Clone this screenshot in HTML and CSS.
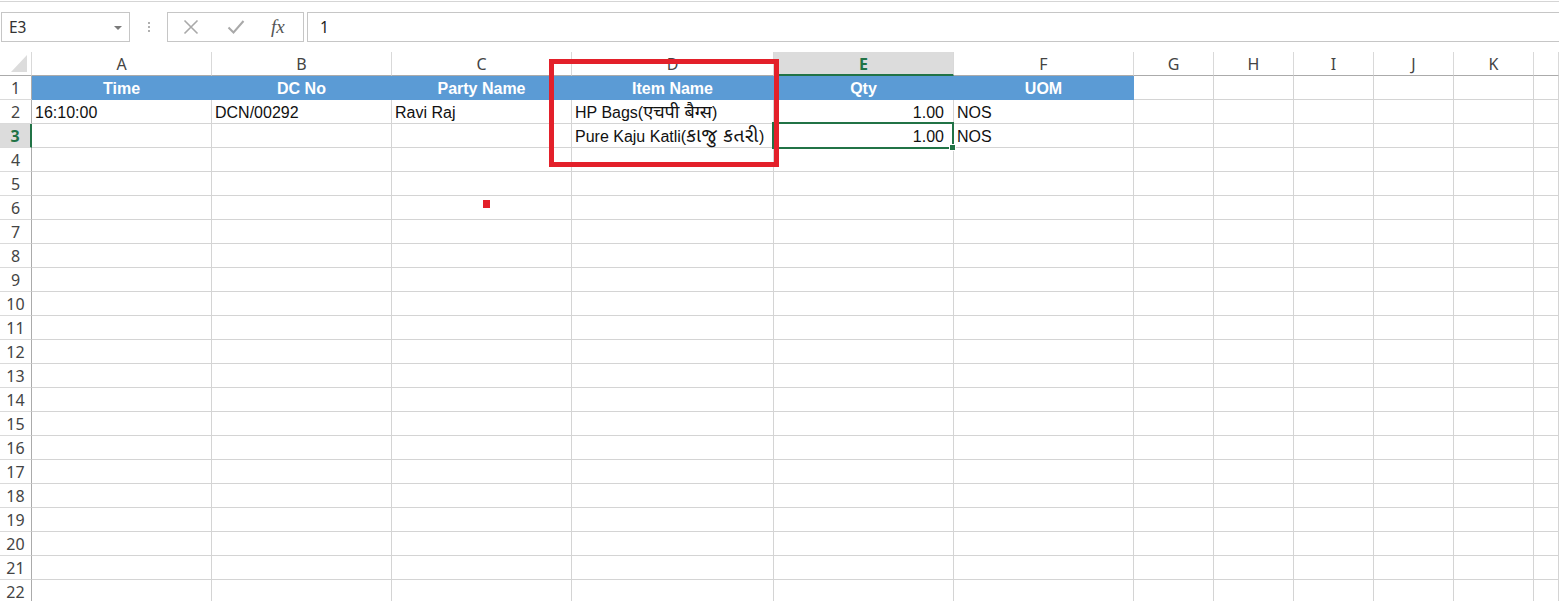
FILE: index.html
```html
<!DOCTYPE html>
<html lang="en">
<head>
<meta charset="utf-8">
<title>Sheet</title>
<link rel="stylesheet" href="styles.css">
</head>
<body>
<div class="app">
  <div class="topline"></div>
  <div class="fbar">
    <div class="namebox">
      <span class="name">E3</span>
      <span class="arrow"></span>
    </div>
    <div class="grip"><i></i><i></i><i></i></div>
    <div class="fbtns">
      <svg class="ico" width="16" height="16" viewBox="0 0 16 16"><path d="M1.5 1.5 L14.5 14.5 M14.5 1.5 L1.5 14.5" stroke="#a9a9a9" stroke-width="1.6" fill="none"/></svg>
      <svg class="ico" width="18" height="14" viewBox="0 0 18 14"><path d="M1.5 7.5 L6.5 12.5 L16.5 1" stroke="#a9a9a9" stroke-width="2" fill="none"/></svg>
      <span class="fx">fx</span>
    </div>
    <div class="finput">1</div>
  </div>

  <div class="sheet">
    <div class="row head">
      <div class="corner"><span class="tri"></span></div>
      <div class="ch">A</div><div class="ch">B</div><div class="ch">C</div><div class="ch">D</div>
      <div class="ch sel">E</div><div class="ch">F</div><div class="ch">G</div><div class="ch">H</div>
      <div class="ch">I</div><div class="ch">J</div><div class="ch">K</div><div class="ch"></div>
    </div>
    <div class="row">
      <div class="rh">1</div>
      <div class="c hd">Time</div><div class="c hd">DC No</div><div class="c hd">Party Name</div><div class="c hd">Item Name</div>
      <div class="c hd">Qty</div><div class="c hd">UOM</div>
      <div class="c"></div><div class="c"></div><div class="c"></div><div class="c"></div><div class="c"></div><div class="c"></div>
    </div>
    <div class="row">
      <div class="rh">2</div>
      <div class="c">16:10:00</div><div class="c">DCN/00292</div><div class="c">Ravi Raj</div><div class="c">HP Bags(<span class="indic">एचपी बैग्स</span>)</div>
      <div class="c num">1.00</div><div class="c">NOS</div>
      <div class="c"></div><div class="c"></div><div class="c"></div><div class="c"></div><div class="c"></div><div class="c"></div>
    </div>
    <div class="row">
      <div class="rh sel">3</div>
      <div class="c"></div><div class="c"></div><div class="c"></div><div class="c">Pure Kaju Katli(<span class="indic gu">કાજુ કતરી</span>)</div>
      <div class="c num">1.00</div><div class="c">NOS</div>
      <div class="c"></div><div class="c"></div><div class="c"></div><div class="c"></div><div class="c"></div><div class="c"></div>
    </div>
    <div class="row"><div class="rh">4</div><div class="c"></div><div class="c"></div><div class="c"></div><div class="c"></div><div class="c"></div><div class="c"></div><div class="c"></div><div class="c"></div><div class="c"></div><div class="c"></div><div class="c"></div><div class="c"></div></div>
    <div class="row"><div class="rh">5</div><div class="c"></div><div class="c"></div><div class="c"></div><div class="c"></div><div class="c"></div><div class="c"></div><div class="c"></div><div class="c"></div><div class="c"></div><div class="c"></div><div class="c"></div><div class="c"></div></div>
    <div class="row"><div class="rh">6</div><div class="c"></div><div class="c"></div><div class="c"></div><div class="c"></div><div class="c"></div><div class="c"></div><div class="c"></div><div class="c"></div><div class="c"></div><div class="c"></div><div class="c"></div><div class="c"></div></div>
    <div class="row"><div class="rh">7</div><div class="c"></div><div class="c"></div><div class="c"></div><div class="c"></div><div class="c"></div><div class="c"></div><div class="c"></div><div class="c"></div><div class="c"></div><div class="c"></div><div class="c"></div><div class="c"></div></div>
    <div class="row"><div class="rh">8</div><div class="c"></div><div class="c"></div><div class="c"></div><div class="c"></div><div class="c"></div><div class="c"></div><div class="c"></div><div class="c"></div><div class="c"></div><div class="c"></div><div class="c"></div><div class="c"></div></div>
    <div class="row"><div class="rh">9</div><div class="c"></div><div class="c"></div><div class="c"></div><div class="c"></div><div class="c"></div><div class="c"></div><div class="c"></div><div class="c"></div><div class="c"></div><div class="c"></div><div class="c"></div><div class="c"></div></div>
    <div class="row"><div class="rh">10</div><div class="c"></div><div class="c"></div><div class="c"></div><div class="c"></div><div class="c"></div><div class="c"></div><div class="c"></div><div class="c"></div><div class="c"></div><div class="c"></div><div class="c"></div><div class="c"></div></div>
    <div class="row"><div class="rh">11</div><div class="c"></div><div class="c"></div><div class="c"></div><div class="c"></div><div class="c"></div><div class="c"></div><div class="c"></div><div class="c"></div><div class="c"></div><div class="c"></div><div class="c"></div><div class="c"></div></div>
    <div class="row"><div class="rh">12</div><div class="c"></div><div class="c"></div><div class="c"></div><div class="c"></div><div class="c"></div><div class="c"></div><div class="c"></div><div class="c"></div><div class="c"></div><div class="c"></div><div class="c"></div><div class="c"></div></div>
    <div class="row"><div class="rh">13</div><div class="c"></div><div class="c"></div><div class="c"></div><div class="c"></div><div class="c"></div><div class="c"></div><div class="c"></div><div class="c"></div><div class="c"></div><div class="c"></div><div class="c"></div><div class="c"></div></div>
    <div class="row"><div class="rh">14</div><div class="c"></div><div class="c"></div><div class="c"></div><div class="c"></div><div class="c"></div><div class="c"></div><div class="c"></div><div class="c"></div><div class="c"></div><div class="c"></div><div class="c"></div><div class="c"></div></div>
    <div class="row"><div class="rh">15</div><div class="c"></div><div class="c"></div><div class="c"></div><div class="c"></div><div class="c"></div><div class="c"></div><div class="c"></div><div class="c"></div><div class="c"></div><div class="c"></div><div class="c"></div><div class="c"></div></div>
    <div class="row"><div class="rh">16</div><div class="c"></div><div class="c"></div><div class="c"></div><div class="c"></div><div class="c"></div><div class="c"></div><div class="c"></div><div class="c"></div><div class="c"></div><div class="c"></div><div class="c"></div><div class="c"></div></div>
    <div class="row"><div class="rh">17</div><div class="c"></div><div class="c"></div><div class="c"></div><div class="c"></div><div class="c"></div><div class="c"></div><div class="c"></div><div class="c"></div><div class="c"></div><div class="c"></div><div class="c"></div><div class="c"></div></div>
    <div class="row"><div class="rh">18</div><div class="c"></div><div class="c"></div><div class="c"></div><div class="c"></div><div class="c"></div><div class="c"></div><div class="c"></div><div class="c"></div><div class="c"></div><div class="c"></div><div class="c"></div><div class="c"></div></div>
    <div class="row"><div class="rh">19</div><div class="c"></div><div class="c"></div><div class="c"></div><div class="c"></div><div class="c"></div><div class="c"></div><div class="c"></div><div class="c"></div><div class="c"></div><div class="c"></div><div class="c"></div><div class="c"></div></div>
    <div class="row"><div class="rh">20</div><div class="c"></div><div class="c"></div><div class="c"></div><div class="c"></div><div class="c"></div><div class="c"></div><div class="c"></div><div class="c"></div><div class="c"></div><div class="c"></div><div class="c"></div><div class="c"></div></div>
    <div class="row"><div class="rh">21</div><div class="c"></div><div class="c"></div><div class="c"></div><div class="c"></div><div class="c"></div><div class="c"></div><div class="c"></div><div class="c"></div><div class="c"></div><div class="c"></div><div class="c"></div><div class="c"></div></div>
    <div class="row"><div class="rh">22</div><div class="c"></div><div class="c"></div><div class="c"></div><div class="c"></div><div class="c"></div><div class="c"></div><div class="c"></div><div class="c"></div><div class="c"></div><div class="c"></div><div class="c"></div><div class="c"></div></div>

    <div class="selbox"><span class="handle"></span></div>
    <div class="redbox"></div>
    <div class="reddot"></div>
  </div>
</div>
</body>
</html>
```

FILE: styles.css
```css
html, body {
  margin: 0;
  padding: 0;
  background: #ffffff;
  overflow: hidden;
}
.app {
  width: 1559px;
  height: 601px;
  overflow: hidden;
  font-family: "Noto Sans", "Open Sans", sans-serif;
}
.topline {
  margin-top: 1px;
  border-top: 1px solid #d5d5d5;
}
.fbar {
  display: flex;
  align-items: stretch;
  height: 30px;
  margin-top: 10px;
  margin-bottom: 10px;
}
.namebox {
  box-sizing: border-box;
  width: 129px;
  margin-left: 1px;
  border: 1px solid #c6c6c6;
  display: flex;
  align-items: center;
  justify-content: space-between;
  padding: 0 7px 0 7px;
}
.name {
  font-size: 15.5px;
  color: #333;
}
.arrow {
  width: 0;
  height: 0;
  border-left: 4px solid transparent;
  border-right: 4px solid transparent;
  border-top: 4px solid #7a7a7a;
  margin-top: 1px;
}
.grip {
  width: 37px;
  display: flex;
  flex-direction: column;
  align-items: center;
  justify-content: center;
  gap: 2px;
}
.grip i {
  display: block;
  width: 2px;
  height: 2px;
  background: #b0b0b0;
}
.fbtns {
  box-sizing: border-box;
  width: 137px;
  border: 1px solid #c6c6c6;
  display: flex;
  align-items: center;
  padding-left: 15px;
  gap: 28px;
}
.fbtns .ico { display: block; }
.fx {
  font-family: "Liberation Serif", "DejaVu Serif", serif;
  font-style: italic;
  font-size: 19px;
  color: #555;
  margin-left: -2px;
  line-height: 1;
  margin-top: -2px;
}
.finput {
  box-sizing: border-box;
  flex: 1;
  margin-left: 3px;
  border: 1px solid #c6c6c6;
  border-right: none;
  font-size: 15.5px;
  color: #222;
  padding-left: 12px;
  line-height: 28px;
}
.sheet {
  position: relative;
}
.row {
  display: grid;
  grid-template-columns: 32px 180px 180px 180px 202px 180px 180px 80px 80px 80px 80px 80px 25px;
  height: 24px;
}
.row > div {
  box-sizing: border-box;
  height: 24px;
}
.corner {
  border-right: 1px solid #d9d9d9;
  border-bottom: 1px solid #ababab;
  position: relative;
}
.tri {
  position: absolute;
  right: 4px;
  bottom: 3px;
  width: 16px;
  height: 17px;
  background: #dcdcdc;
  clip-path: polygon(100% 0, 100% 100%, 0 100%);
}
.ch {
  border-right: 1px solid #d9d9d9;
  border-bottom: 1px solid #ababab;
  text-align: center;
  font-size: 16px;
  color: #444;
  line-height: 24px;
}
.ch.sel {
  background: #dcdcdc;
  color: #217346;
  font-weight: bold;
  border-bottom: 2px solid #217346;
}
.rh {
  border-right: 1px solid #ababab;
  border-bottom: 1px solid #dadada;
  text-align: center;
  font-size: 16px;
  color: #444;
  line-height: 24px;
}
.rh.sel {
  background: #dcdcdc;
  color: #217346;
  font-weight: bold;
  border-right: 2px solid #217346;
}
.c {
  border-right: 1px solid #d4d4d4;
  border-bottom: 1px solid #d4d4d4;
  font-family: "Liberation Sans", "Noto Sans Devanagari", "Noto Sans Gujarati", "Noto Sans", sans-serif;
  font-size: 16px;
  color: #111;
  line-height: 22px;
  padding-top: 2px;
  padding-left: 3px;
  white-space: nowrap;
  overflow: visible;
}
.c.hd {
  background: #5b9bd5;
  border-color: #5b9bd5;
  color: #ffffff;
  font-weight: bold;
  text-align: center;
  padding-left: 0;
}
.c.num {
  text-align: right;
  padding-right: 9px;
}
.indic {
  font-size: 18px;
  line-height: 20px;
}
.indic.gu {
  font-size: 19px;
  letter-spacing: 0.5px;
}
.selbox {
  position: absolute;
  left: 772px;
  top: 70px;
  width: 182px;
  height: 27px;
  box-sizing: border-box;
  border: 2px solid #217346;
}
.handle {
  position: absolute;
  right: -4px;
  bottom: -4px;
  width: 5px;
  height: 5px;
  background: #217346;
  border: 1px solid #ffffff;
}
.redbox {
  position: absolute;
  left: 549px;
  top: 7px;
  width: 230px;
  height: 108px;
  box-sizing: border-box;
  border: 5px solid #e3202a;
}
.reddot {
  position: absolute;
  left: 483px;
  top: 148px;
  width: 7px;
  height: 8px;
  background: #e3202a;
}
```
